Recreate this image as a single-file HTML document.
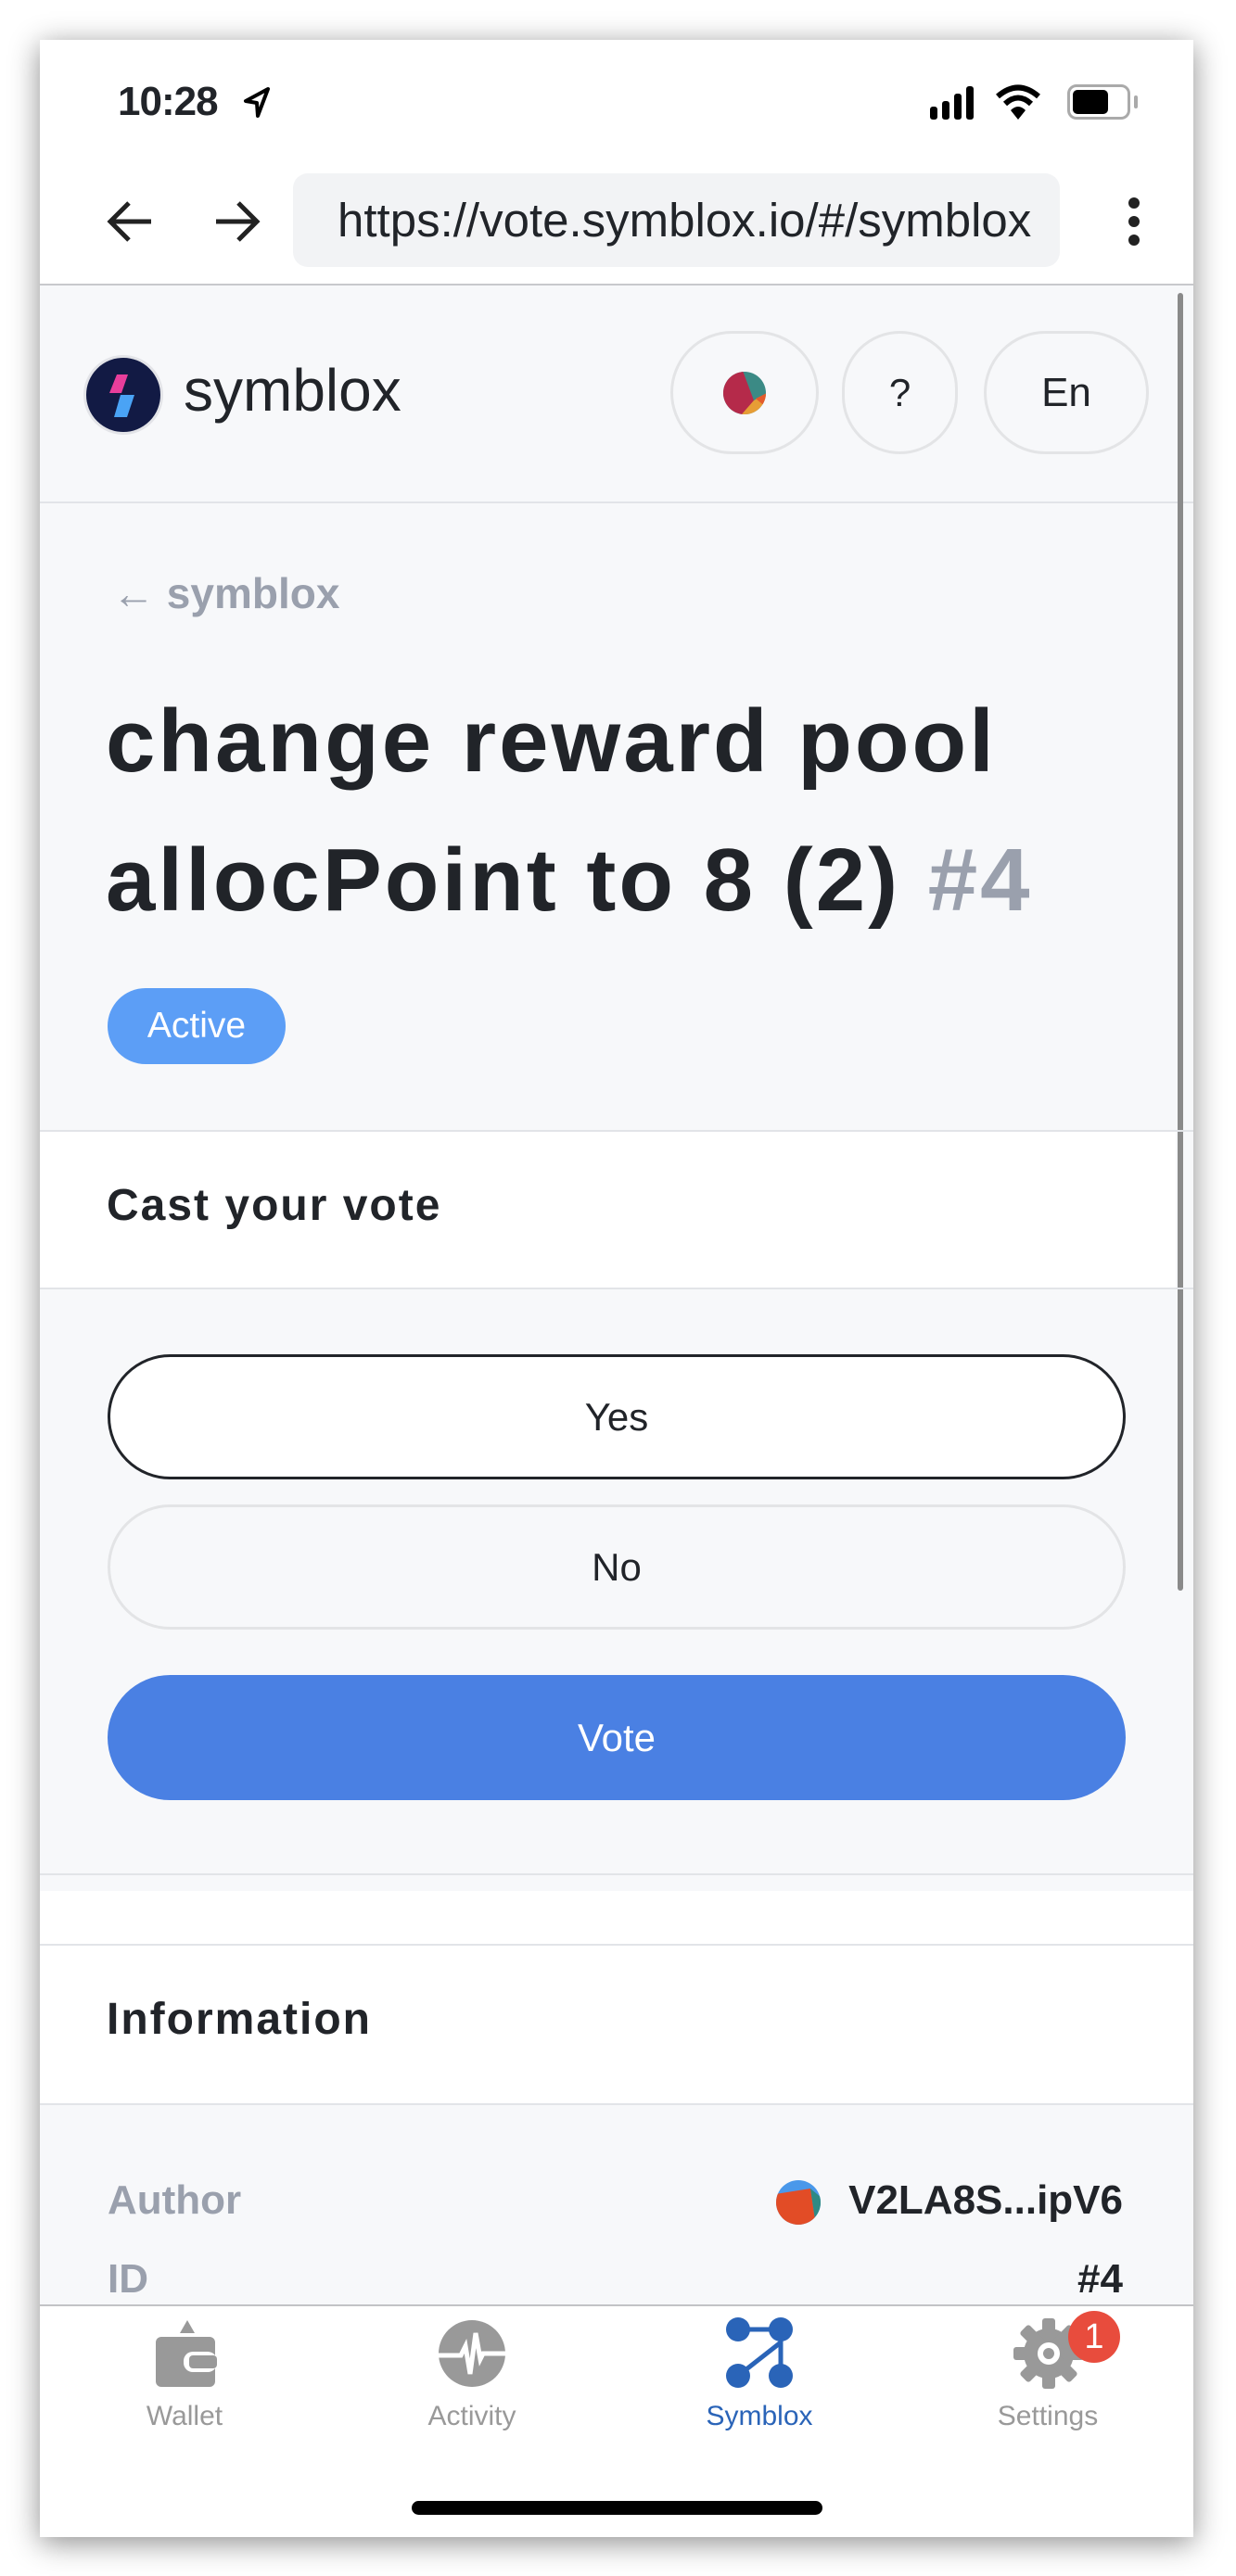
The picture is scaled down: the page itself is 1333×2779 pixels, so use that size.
<!DOCTYPE html>
<html><head><meta charset="utf-8">
<style>
*{margin:0;padding:0;box-sizing:border-box}
body{width:1333px;height:2779px;background:#fff;position:relative;overflow:hidden;font-family:"Liberation Sans",sans-serif;color:#212429}
.frame{position:absolute;left:43px;top:43px;width:1244px;height:2694px;background:#fff;box-shadow:0 6px 30px rgba(0,0,0,.45);overflow:hidden}
.a{position:absolute}
.line{position:absolute;left:0;width:1244px;height:2px;background:#e2e4e8}
.pill{position:absolute;border:3px solid #e3e4e6;border-radius:70px;background:#f7f8fa;display:flex;align-items:center;justify-content:center;font-size:42px}
.btn{position:absolute;left:73px;width:1098px;height:135px;border-radius:68px;display:flex;align-items:center;justify-content:center;font-size:42px}
.tab{position:absolute;top:2547px;width:200px;text-align:center;font-size:30px;color:#999}
</style></head><body>
<div class="frame">
 <div class="a" style="left:84px;top:42px;font-size:44px;font-weight:bold;letter-spacing:-1px">10:28</div>
 <svg class="a" style="left:218px;top:50px" width="32" height="36" viewBox="0 0 32 36"><path d="M28 3 L4 16 L16 18 L17 32 Z" fill="none" stroke="#000" stroke-width="4" stroke-linejoin="round"/></svg>
 <svg class="a" style="left:960px;top:48px" width="60" height="40"><rect x="0" y="24" width="8" height="14" rx="3"/><rect x="13" y="18" width="8" height="20" rx="3"/><rect x="26" y="10" width="8" height="28" rx="3"/><rect x="39" y="2" width="8" height="36" rx="3"/></svg>
 <svg class="a" style="left:1030px;top:48px" width="50" height="40" viewBox="0 0 50 40"><path d="M3 13 Q25 -6 47 13" stroke="#000" stroke-width="6" fill="none"/><path d="M11 21 Q25 8 39 21" stroke="#000" stroke-width="6" fill="none"/><path d="M17 28 L25 38 L33 28 Q25 20 17 28Z"/></svg>
 <div class="a" style="left:1108px;top:48px;width:68px;height:38px;border:3px solid #aaa;border-radius:10px"><div style="position:absolute;left:3px;top:3px;width:38px;height:26px;background:#000;border-radius:5px"></div></div>
 <div class="a" style="left:1180px;top:60px;width:4px;height:14px;background:#aaa;border-radius:2px"></div>
 <svg class="a" style="left:68px;top:166px" width="60" height="60" viewBox="0 0 60 60"><path d="M52 30 H8 M28 10 L8 30 L28 50" stroke="#222" stroke-width="5" fill="none"/></svg>
 <svg class="a" style="left:182px;top:166px" width="60" height="60" viewBox="0 0 60 60"><path d="M8 30 H52 M32 10 L52 30 L32 50" stroke="#222" stroke-width="5" fill="none"/></svg>
 <div class="a" style="left:273px;top:144px;width:827px;height:101px;background:#f2f3f5;border-radius:16px;font-size:51px;line-height:101px;padding-left:48px;white-space:nowrap;overflow:hidden">https://vote.symblox.io/#/symblox</div>
 <div class="a" style="left:1174px;top:170px;width:12px;height:12px;border-radius:6px;background:#222;box-shadow:0 20px 0 #222,0 40px 0 #222"></div>
 <div class="line" style="top:263px;background:#c8c9cc"></div>
 <div class="a" style="left:0;top:265px;width:1244px;height:1732px;background:#f7f8fa"></div>
 <div class="a" style="left:47px;top:340px;width:86px;height:86px;border-radius:43px;background:#121a44;border:3px solid #e3e4e8;overflow:hidden">
  <svg width="80" height="80" viewBox="0 0 80 80"><path d="M33 18 L45 18 L38 38 L25 38Z" fill="#e83e9b"/><path d="M37 40 L52 40 L44 64 L30 64Z" fill="#4aa3f5"/></svg></div>
 <div class="a" style="left:155px;top:338px;font-size:64px;line-height:80px">symblox</div>
 <div class="pill" style="left:680px;top:314px;width:160px;height:133px"><svg width="48" height="48" viewBox="0 0 48 48"><clipPath id="c"><circle cx="24" cy="24" r="23"/></clipPath><g clip-path="url(#c)"><rect width="48" height="48" fill="#3b8a85"/><path d="M0 0 L22 0 L34 32 L24 48 L0 48Z" fill="#b52a4a"/><path d="M22 8 L34 32 L48 24 L48 48 L20 48 L34 32Z" fill="#e79d35"/><path d="M36 30 L48 24 L48 40Z" fill="#e45b2b"/></g></svg></div>
 <div class="pill" style="left:865px;top:314px;width:125px;height:133px">?</div>
 <div class="pill" style="left:1018px;top:314px;width:178px;height:133px;font-size:44px">En</div>
 <div class="line" style="top:498px"></div>
 <div class="a" style="left:1227px;top:273px;width:6px;height:1400px;background:#8a8a8a;border-radius:3px"></div>
 <div class="a" style="left:78px;top:570px;font-size:46px;color:#9aa0ad;font-weight:bold">←&nbsp;symblox</div>
 <div class="a" style="left:71px;top:682px;font-size:96px;font-weight:bold;line-height:150px;letter-spacing:3px;width:1160px">change reward pool<br>allocPoint to 8 (2) <span style="color:#9aa0ad">#4</span></div>
 <div class="a" style="left:73px;top:1023px;width:192px;height:82px;border-radius:41px;background:#5c9ef6;color:#fff;font-size:39px;line-height:82px;text-align:center">Active</div>
 <div class="line" style="top:1176px"></div>
 <div class="a" style="left:0;top:1178px;width:1225px;height:168px;background:#fff"></div>
 <div class="a" style="left:72px;top:1230px;font-size:48px;font-weight:bold;letter-spacing:2px">Cast your vote</div>
 <div class="line" style="top:1346px"></div>
 <div class="btn" style="top:1418px;border:3px solid #212429;background:#fff">Yes</div>
 <div class="btn" style="top:1580px;border:3px solid #e3e4e6;background:#f7f8fa">No</div>
 <div class="btn" style="top:1764px;background:#4a80e3;color:#fff">Vote</div>
 <div class="line" style="top:1978px"></div>
 <div class="line" style="top:2054px"></div>
 <div class="a" style="left:0;top:2056px;width:1244px;height:170px;background:#fff"></div>
 <div class="a" style="left:72px;top:2108px;font-size:48px;font-weight:bold;letter-spacing:2px">Information</div>
 <div class="line" style="top:2226px"></div>
 <div class="a" style="left:0;top:2228px;width:1244px;height:216px;background:#f7f8fa"></div>
 <div class="a" style="left:73px;top:2306px;font-size:44px;font-weight:bold;color:#9aa0ad">Author</div>
 <svg class="a" style="left:793px;top:2308px" width="50" height="50" viewBox="0 0 50 50"><clipPath id="d"><circle cx="25" cy="25" r="24"/></clipPath><g clip-path="url(#d)"><rect width="50" height="50" fill="#4a98ea"/><path d="M0 16 L38 10 L44 50 L0 50Z" fill="#e24c26"/><path d="M38 10 L50 20 L50 50 L44 50Z" fill="#2f8a84"/></g></svg>
 <div class="a" style="right:76px;top:2306px;font-size:44px;font-weight:bold">V2LA8S...ipV6</div>
 <div class="a" style="left:73px;top:2391px;font-size:44px;font-weight:bold;color:#9aa0ad">ID</div>
 <div class="a" style="right:76px;top:2391px;font-size:44px;font-weight:bold">#4</div>
 <div class="a" style="left:0;top:2443px;width:1244px;height:251px;background:#fff;border-top:2px solid #c2c3c6"></div>
 <svg class="a" style="left:119px;top:2458px" width="76" height="76" viewBox="0 0 76 76"><path d="M40 2 L48 16 L32 16Z" fill="#999"/><rect x="6" y="20" width="64" height="54" rx="6" fill="#999"/><rect x="36" y="36" width="36" height="22" rx="10" fill="#fff"/><rect x="42" y="40" width="30" height="14" rx="4" fill="#999"/></svg>
 <svg class="a" style="left:428px;top:2458px" width="76" height="76" viewBox="0 0 76 76"><circle cx="38" cy="38" r="36" fill="#999"/><path d="M0 40 H26 L31 30 L36 60 L42 16 L47 44 L50 38 H76" stroke="#fff" stroke-width="5" fill="none"/></svg>
 <svg class="a" style="left:739px;top:2456px" width="76" height="80" viewBox="0 0 76 80"><circle cx="14" cy="14" r="13" fill="#2a64b8"/><circle cx="60" cy="14" r="13" fill="#2a64b8"/><circle cx="14" cy="64" r="13" fill="#2a64b8"/><circle cx="60" cy="64" r="13" fill="#2a64b8"/><path d="M14 14 H60 V64 M60 28 L14 64" stroke="#2a64b8" stroke-width="5" fill="none"/></svg>
 <svg class="a" style="left:1050px;top:2458px" width="76" height="76" viewBox="0 0 76 76"><g fill="#999"><circle cx="38" cy="38" r="27"/><rect x="31" y="0" width="14" height="76" rx="3"/><rect x="31" y="0" width="14" height="76" rx="3" transform="rotate(45 38 38)"/><rect x="31" y="0" width="14" height="76" rx="3" transform="rotate(90 38 38)"/><rect x="31" y="0" width="14" height="76" rx="3" transform="rotate(135 38 38)"/></g><circle cx="38" cy="38" r="12" fill="#fff"/><circle cx="38" cy="38" r="6" fill="#999"/></svg>
 <div class="a" style="left:1109px;top:2450px;width:56px;height:56px;border-radius:28px;background:#e84c3d;color:#fff;font-size:38px;text-align:center;line-height:56px">1</div>
 <div class="tab" style="left:56px">Wallet</div>
 <div class="tab" style="left:366px">Activity</div>
 <div class="tab" style="left:676px;color:#2a64b8">Symblox</div>
 <div class="tab" style="left:987px">Settings</div>
 <div class="a" style="left:401px;top:2655px;width:443px;height:15px;border-radius:8px;background:#000"></div>
</div>
</body></html>
